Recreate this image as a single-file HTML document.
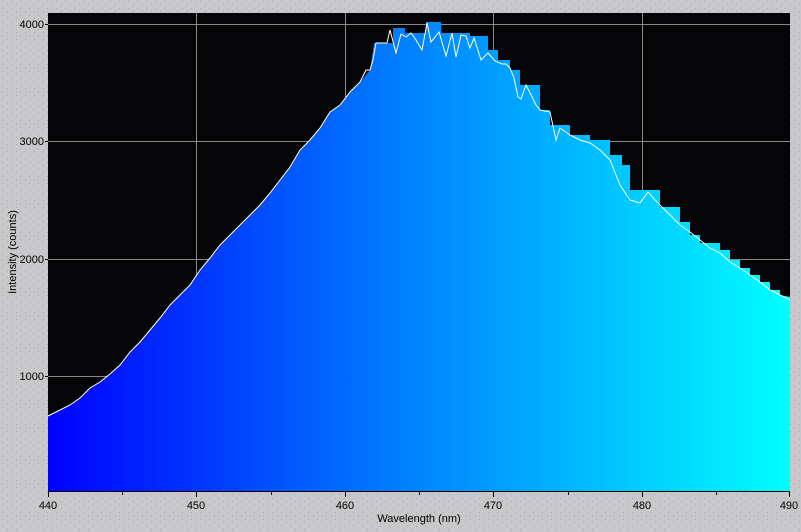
<!DOCTYPE html>
<html><head><style>
html,body{margin:0;padding:0;}
body{width:801px;height:532px;background:#c8c7c9;overflow:hidden;font-family:"Liberation Sans",sans-serif;}
</style></head><body>
<svg width="801" height="532" viewBox="0 0 801 532" xmlns="http://www.w3.org/2000/svg" style="position:absolute;left:0;top:0">
<defs>
<linearGradient id="g" x1="48" x2="790" y1="0" y2="0" gradientUnits="userSpaceOnUse">
<stop offset="0" stop-color="#0000ff"/>
<stop offset="0.45" stop-color="#0078ff"/>
<stop offset="1" stop-color="#00ffff"/>
</linearGradient>
<pattern id="dots" width="9" height="7" patternUnits="userSpaceOnUse">
<rect x="2" y="1" width="1" height="1" fill="#a9a9ab"/>
<rect x="7" y="4" width="1" height="1" fill="#a9a9ab"/>
</pattern>
</defs>
<rect width="801" height="532" fill="url(#dots)"/>
<rect x="48" y="13" width="742" height="478" fill="#050406"/>
<g stroke="#8a8a8a" stroke-width="1">
<line x1="196.5" y1="13" x2="196.5" y2="491"/>
<line x1="345.5" y1="13" x2="345.5" y2="491"/>
<line x1="493.5" y1="13" x2="493.5" y2="491"/>
<line x1="642.5" y1="13" x2="642.5" y2="491"/>
<line x1="48" y1="24.5" x2="790" y2="24.5"/>
<line x1="48" y1="141.5" x2="790" y2="141.5"/>
<line x1="48" y1="259.5" x2="790" y2="259.5"/>
<line x1="48" y1="376.5" x2="790" y2="376.5"/>
</g>
<g fill="url(#g)">
<polygon points="48,491 48,416 60,410 70,405 80,398 90,388 100,382 110,374 120,365 130,352 140,342 150,330 160,318 170,305 180,295 190,285 200,270 210,258 220,245 230,235 240,225 250,215 260,205 270,193 280,180 290,167 300,150 310,140 320,128 330,112 340,105 350,92 360,82 370,70 374,43 393,43 393,28 405,28 405,33 426,33 426,22 441,22 441,33 470,33 470,36 488,36 488,50 498,50 498,60 510,60 510,70 520,70 520,85 540,85 540,110 550,110 550,125 570,125 570,135 590,135 590,140 610,140 610,155 622,155 622,165 630,165 630,190 660,190 660,207 680,207 680,222 690,222 690,235 700,235 700,243 720,243 720,250 730,250 730,260 740,260 740,268 750,268 750,275 760,275 760,282 770,282 770,290 780,290 780,295 790,297 790,491"/>
</g>
<polyline fill="none" stroke="#ffffff" stroke-width="1" points="48,416 60,410 70,405 80,398 90,388 100,382 110,374 120,365 130,352 140,342 150,330 160,318 170,305 180,295 190,285 200,270 210,258 220,245 230,235 240,225 250,215 260,205 270,193 280,180 290,167 300,150 310,140 320,128 330,112 340,105 350,92 360,82 366,70 370,70 373,60 376,43 387,43 390,30 396,53 401,34 406,37 411,33 416,40 422,50 427,23 431,42 439,32 446,56 452,33 456,57 461,35 466,36 470,48 474,38 481,60 488,53 495,61 502,64 506,64 510,68 514,78 518,97 521,99 526,85 532,97 536,105 540,110 550,112 556,140 560,128 570,135 580,140 590,143 600,150 610,160 620,185 630,200 640,203 648,192 655,200 660,205 670,215 680,225 690,232 700,240 710,248 720,253 730,262 740,268 750,275 760,282 770,290 780,295 790,300"/>
<g stroke="#000" stroke-width="1">
<line x1="48" y1="491.5" x2="790" y2="491.5"/>
<line x1="48.5" y1="491" x2="48.5" y2="497"/>
<line x1="122.5" y1="491" x2="122.5" y2="495"/>
<line x1="196.5" y1="491" x2="196.5" y2="497"/>
<line x1="271.5" y1="491" x2="271.5" y2="495"/>
<line x1="345.5" y1="491" x2="345.5" y2="497"/>
<line x1="419.5" y1="491" x2="419.5" y2="495"/>
<line x1="493.5" y1="491" x2="493.5" y2="497"/>
<line x1="568.5" y1="491" x2="568.5" y2="495"/>
<line x1="642.5" y1="491" x2="642.5" y2="497"/>
<line x1="716.5" y1="491" x2="716.5" y2="495"/>
<line x1="789.5" y1="491" x2="789.5" y2="497"/>
<line x1="45" y1="24.5" x2="48" y2="24.5"/>
<line x1="45" y1="141.5" x2="48" y2="141.5"/>
<line x1="45" y1="259.5" x2="48" y2="259.5"/>
<line x1="45" y1="376.5" x2="48" y2="376.5"/>
</g>
<g font-family="Liberation Sans, sans-serif" font-size="11" fill="#000">
<text x="44" y="28" text-anchor="end">4000</text>
<text x="44" y="145" text-anchor="end">3000</text>
<text x="44" y="263" text-anchor="end">2000</text>
<text x="44" y="380" text-anchor="end">1000</text>
<text x="48" y="509" text-anchor="middle">440</text>
<text x="196" y="509" text-anchor="middle">450</text>
<text x="345" y="509" text-anchor="middle">460</text>
<text x="493" y="509" text-anchor="middle">470</text>
<text x="642" y="509" text-anchor="middle">480</text>
<text x="789" y="509" text-anchor="middle">490</text>
<text x="419" y="522" text-anchor="middle">Wavelength (nm)</text>
<text x="0" y="0" text-anchor="middle" transform="translate(16,252) rotate(-90)">Intensity (counts)</text>
</g>
</svg>
</body></html>
